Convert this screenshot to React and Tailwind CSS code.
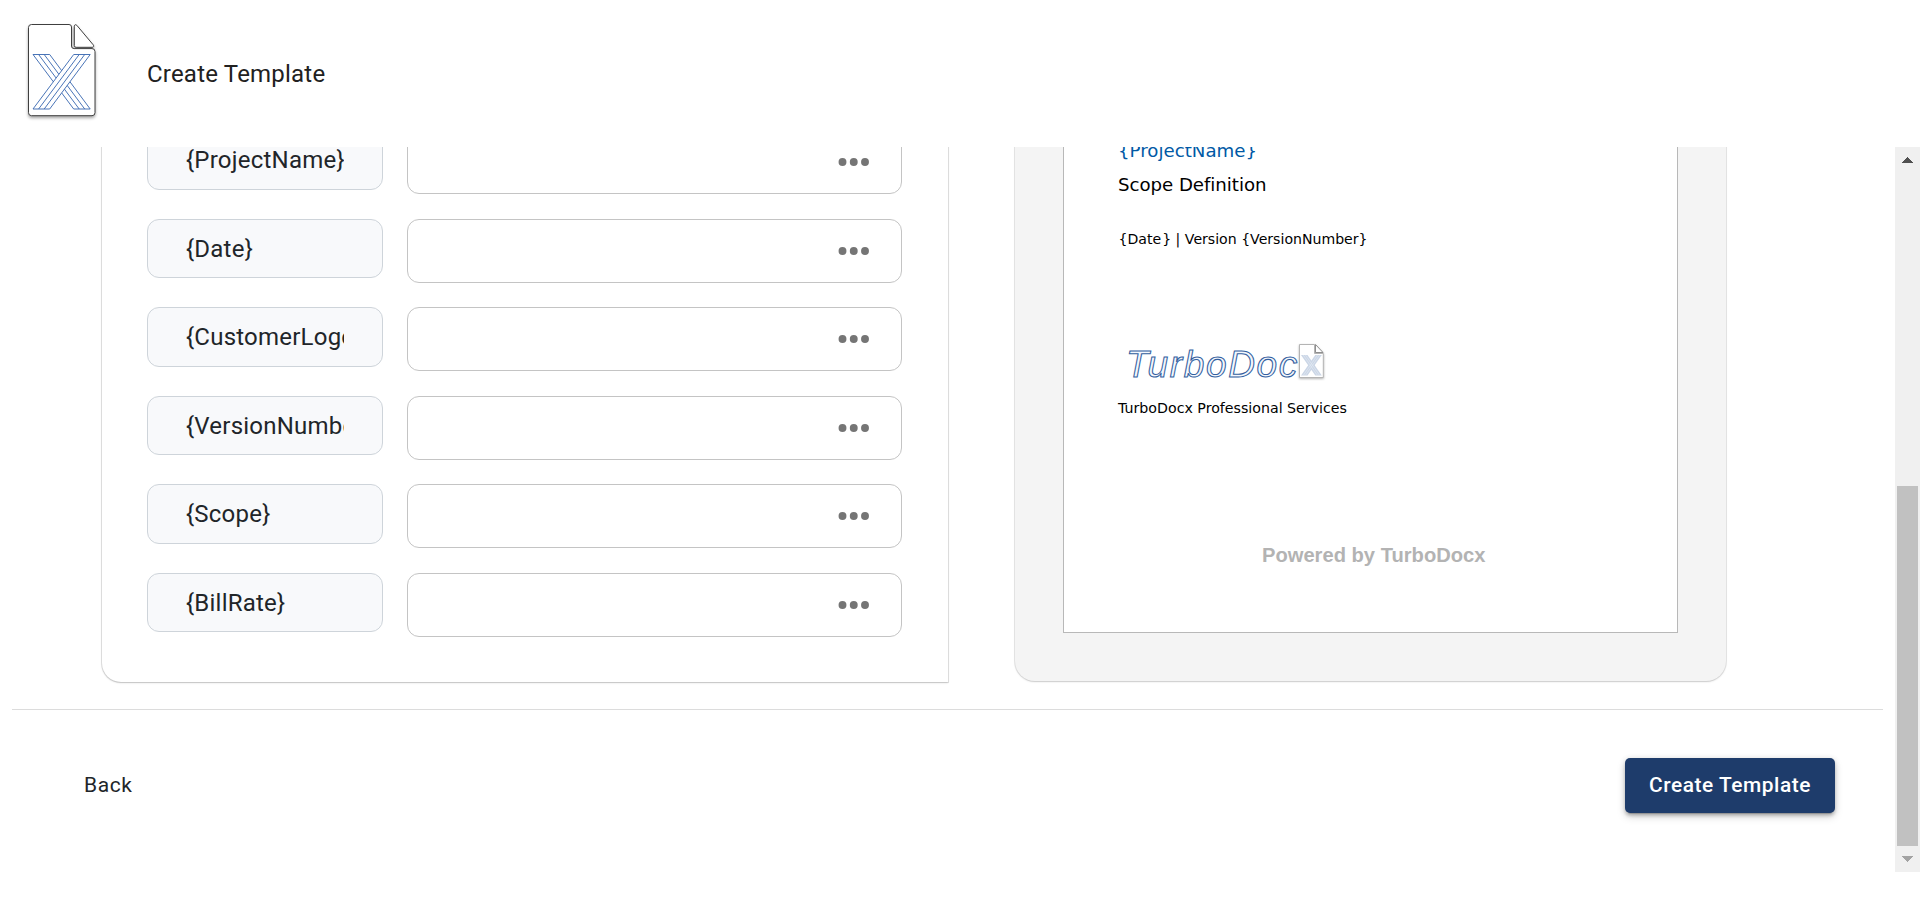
const variables = [
  "{ProjectName}",
  "{Date}",
  "{CustomerLogo}",
  "{VersionNumber}",
  "{Scope}",
  "{BillRate}",
];

function DocxMark() {
  return (
    <svg className="h-[110px] w-[80px]" viewBox="22 18 80 110" fill="none">
      <g className="drop-shadow-[0_2px_1.5px_rgba(0,0,0,0.35)]">
        <path
          d="M31.5 24.5H69a2.5 2.5 0 0 1 2.5 2.5v19a2.6 2.6 0 0 0 2.6 2.6H92a3 3 0 0 1 3 3V112.700a3 3 0 0 1-3 3H31.500a3 3 0 0 1-3-3V27.500a3 3 0 0 1 3-3Z"
          fill="#fff"
          stroke="#3f3f3f"
        />
        <path
          d="M74.300 26.200c0-1.500 1.500-2 2.500-.9L93.200 44.800c1 1.300.4 2.500-1 2.500H76.100a1.800 1.800 0 0 1-1.800-1.800Z"
          fill="#fff"
          stroke="#3f3f3f"
        />
      </g>
      <g stroke="#3f6db3" strokeWidth="0.95">
        <path d="M33 54.500H49.700L90.200 109H73.700Z" fill="#fff" />
        <path d="M38.600 54.500 79.200 109M44.200 54.500 84.700 109" />
        <path d="M73.700 54.500H90.200L49.700 109H33Z" fill="#fff" />
        <path d="M79.200 54.500 38.600 109M84.700 54.500 44.200 109" />
      </g>
    </svg>
  );
}

function TurboDocxLogo() {
  return (
    <svg className="block h-[44px] w-[210px]" viewBox="1120 340 210 44" fill="none">
      <text
        x="1126"
        y="376.500"
        fontFamily="Liberation Sans, sans-serif"
        fontStyle="italic"
        fontSize="37"
        letterSpacing="1.650"
        fill="#f4f7fc"
        stroke="#335f9f"
        strokeWidth="1.050"
      >
        TurboDoc
      </text>
      <g className="drop-shadow-[0_1px_1px_rgba(0,0,0,0.3)]">
        <path d="M1299.500 344.500H1314.500V353.500H1323.300V377.500H1299.500Z" fill="#fff" stroke="#b4b4b4" />
        <path d="M1315.500 344.500V352.500H1323Z" fill="#fff" stroke="#8f8f8f" />
      </g>
      <path d="M1301 355H1307.500L1321.800 375.500H1315.300Z" fill="#cbd6e6" />
      <path d="M1315.300 355H1321.800L1307.500 375.500H1301Z" fill="#cbd6e6" />
      <path
        d="M1303.200 355 1317.500 375.500M1305.400 355 1319.700 375.500M1317.500 355 1303.200 375.500M1319.700 355 1305.400 375.500"
        stroke="#e6ecf5"
        strokeWidth="0.6"
      />
    </svg>
  );
}

function VariableRow({ name }) {
  return (
    <div className="flex h-[63.75px] items-start gap-6">
      <div className="flex h-[59.5px] w-[236px] items-center rounded-xl border border-[#ced4da] bg-[#f8f9fb] px-[38px]">
        <span className="w-[158px] overflow-hidden text-[24px] leading-8 tracking-[0.00938em] whitespace-nowrap">
          {name}
        </span>
      </div>
      <div className="flex h-full w-[495px] items-center justify-end rounded-xl border border-[#c4c4c4] pr-[25px]">
        <svg className="h-6 w-[45px]" viewBox="0 0 45 24" fill="#757575">
          <circle cx="11.500" cy="12" r="3.950" />
          <circle cx="22.750" cy="12" r="3.950" />
          <circle cx="34" cy="12" r="3.950" />
        </svg>
      </div>
    </div>
  );
}

function Scrollbar() {
  return (
    <div className="flex h-full w-[25px] flex-col items-center bg-[#f0f0f0]">
      <svg className="mt-[10px] h-[6px] w-[11px]" viewBox="0 0 11 6" shapeRendering="crispEdges">
        <path d="M5 0h1v1h1v1h1v1h1v1h1v1h1v1H0V5h1V4h1V3h1V2h1V1h1Z" fill="#505050" />
      </svg>
      <div className="mt-[323px] h-[360px] w-[21px] bg-[#c1c1c1]" />
      <svg className="mt-[10px] h-[6px] w-[11px]" viewBox="0 0 11 6" shapeRendering="crispEdges">
        <path d="M0 0h11v1h-1v1H9v1H8v1H7v1H6v1H5V5H4V4H3V3H2V2H1V1H0Z" fill="#a3a3a3" />
      </svg>
    </div>
  );
}

export default function App() {
  return (
    <div className="flex h-[905px] w-full flex-col overflow-hidden bg-white font-[Roboto,sans-serif] text-[#212529]">
      <header className="flex h-[147px] shrink-0 items-center">
        <div className="ml-[22px] h-[110px] w-[80px] self-start pt-[18px]">
          <DocxMark />
        </div>
        <h1 className="ml-[45px] text-[24px] leading-8 tracking-[0.0085em] text-[#212121]">Create Template</h1>
      </header>

      <main className="flex h-[725px] shrink-0">
        <div className="flex h-full flex-1 flex-col overflow-hidden">
          <div className="-mt-5 flex shrink-0 gap-[67px] pl-[102px]">
            <section className="flex h-[555px] w-[846px] flex-col gap-[24.75px] rounded-bl-[19px] bg-white pt-[3.4px] pl-[45px] shadow-[0_0_0_1px_rgba(0,0,0,0.1),0_1px_2px_rgba(0,0,0,0.16)]">
              {variables.map((name) => (
                <VariableRow key={name} name={name} />
              ))}
            </section>

            <section className="h-[554px] w-[711px] rounded-b-[20px] bg-[#f4f4f4] pl-12 shadow-[0_0_0_1px_rgba(0,0,0,0.08),0_1px_2px_rgba(0,0,0,0.14)]">
              <article className="flex h-[506px] w-[615px] flex-col border border-t-0 border-[#b8b8b8] bg-white pt-[13px] pl-[54px] font-['DejaVu_Sans',sans-serif] text-black">
                <p className="text-[18.2px] leading-[22px] text-[#0059a5]">{"{ProjectName}"}</p>
                <p className="mt-3 text-[18.2px] leading-[22px] tracking-[-0.05px]">Scope Definition</p>
                <p className="mt-[34px] ml-[0.5px] text-[14.1px] leading-[18px] whitespace-nowrap">
                  {"{Date"}
                  <span className="ml-px">{"}"}</span>
                  {" | Version {VersionNumber}"}
                </p>
                <div className="mt-[92px] ml-[1.5px]">
                  <TurboDocxLogo />
                </div>
                <p className="mt-[15px] text-[14.2px] leading-[18px]">TurboDocx Professional Services</p>
                <p className="mt-[126px] ml-[144px] font-['Liberation_Sans',sans-serif] text-[20.15px] leading-6 font-bold text-[#b3b3b3]">
                  Powered by TurboDocx
                </p>
              </article>
            </section>
          </div>

          <hr className="mt-[27px] mr-3 ml-3 shrink-0 border-t border-[#dcdcdc]" />

          <footer className="mt-12 flex shrink-0 items-center justify-between pr-[60px] pl-[84px]">
            <button className="pb-[2px] text-[21px] leading-8 tracking-[0.02857em]">Back</button>
            <button className="h-[55px] w-[210px] rounded-[5px] bg-[#1e3c6b] pb-[2px] text-[20.9px] leading-8 font-medium tracking-[0.0265em] text-white shadow-[0_4px_1px_-3px_rgba(0,0,0,0.2),0_3px_3px_0_rgba(0,0,0,0.14),0_1px_6px_0_rgba(0,0,0,0.12),0_4px_8px_0_rgba(0,0,0,0.15)]">
              Create Template
            </button>
          </footer>
        </div>
        <Scrollbar />
      </main>
    </div>
  );
}
